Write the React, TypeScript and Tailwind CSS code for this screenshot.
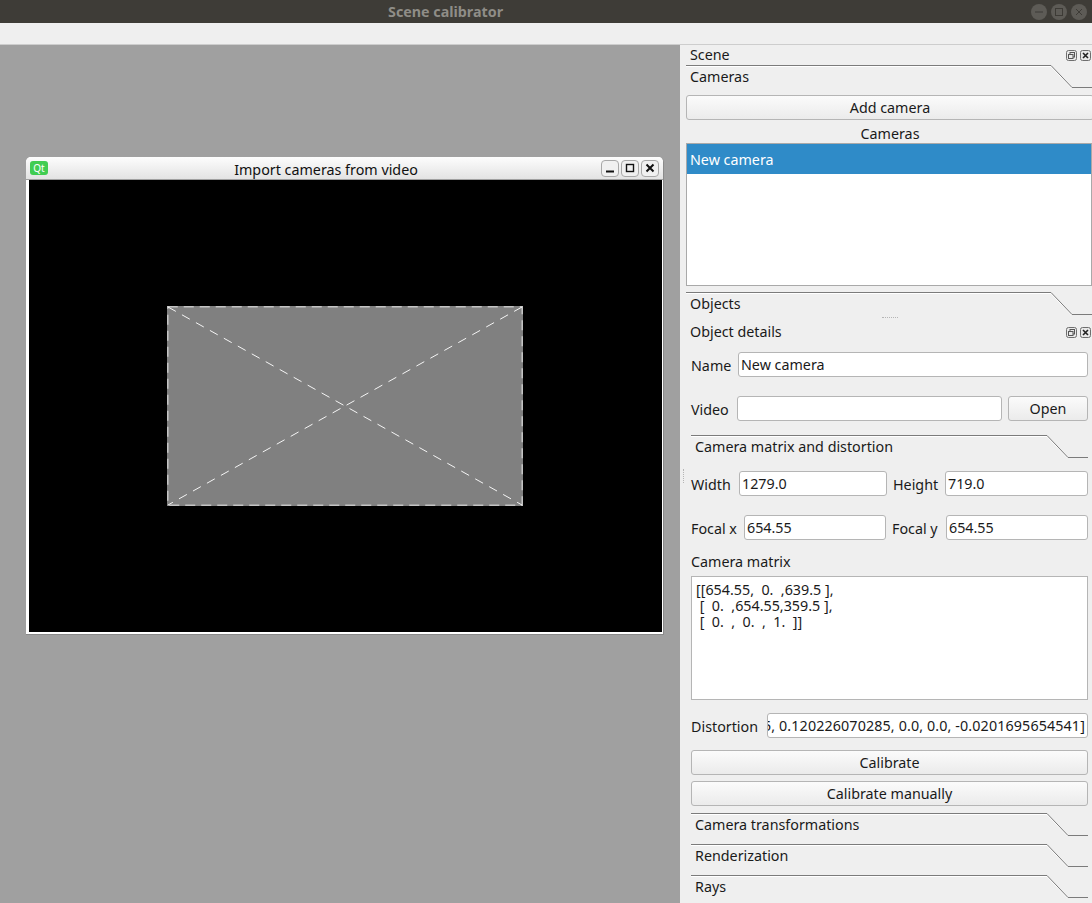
const FONT = "font-['Noto_Sans',sans-serif]";

const TabHeader = ({ label, width, indent = 4 }: { label: string; width: number; indent?: number }) => {
  return (
    <div className="relative h-[23px] shrink-0" style={{ width }}>
      <svg className="absolute left-0 top-0" width={width} height={23}>
        <path d={`M0 0.5 H${width - 41} L${width - 20} 22.5 H${width}`} fill="none" stroke="#fff" strokeWidth="1" transform="translate(0 1)" />
        <path d={`M0 0.5 H${width - 41} L${width - 20} 22.5 H${width}`} fill="none" stroke="#7b7b7b" strokeWidth="1" />
      </svg>
      <div className="absolute top-[2px] text-[14.3px] leading-[20px] text-[#1a1a1a]" style={{ left: indent }}>
        {label}
      </div>
    </div>
  );
};

const Field = ({ value, className }: { value: string; className: string }) => {
  return (
    <input
      readOnly
      value={value}
      className={`h-[25px] rounded-[3px] border border-[#b5b5b5] bg-white px-[2px] text-[14.3px] text-[#1a1a1a] outline-none ${className}`}
    />
  );
};

const QtButton = ({ label, className }: { label: string; className: string }) => {
  return (
    <button className={`h-[25px] rounded-[3px] border border-[#b5b5b5] bg-gradient-to-b from-[#fbfbfb] to-[#ebebeb] pt-[1px] text-center text-[14.3px] leading-[22px] text-[#1a1a1a] ${className}`}>
      {label}
    </button>
  );
};

const DockIcons = () => {
  return (
    <div className="flex gap-[3px]">
      <svg width="11" height="11" viewBox="0 0 11 11">
        <rect x="0.5" y="0.5" width="10" height="10" rx="2" fill="#e8e8e8" stroke="#6e6e6e" />
        <rect x="4" y="2.5" width="4.5" height="4.5" fill="none" stroke="#555" />
        <rect x="2.5" y="4.5" width="4.5" height="4" fill="#e8e8e8" stroke="#555" />
      </svg>
      <svg width="11" height="11" viewBox="0 0 11 11">
        <rect x="0.5" y="0.5" width="10" height="10" rx="2" fill="#e8e8e8" stroke="#6e6e6e" />
        <path d="M3 3 L8 8 M8 3 L3 8" stroke="#222" strokeWidth="1.6" />
      </svg>
    </div>
  );
};

const CircleButton = ({ children }: { children: React.ReactNode }) => {
  return (
    <div className="flex h-[16px] w-[16px] items-center justify-center rounded-full bg-[#5d5b56]">
      <svg width="10" height="10" viewBox="0 0 10 10" fill="none" stroke="#3d3b36" strokeWidth="1">
        {children}
      </svg>
    </div>
  );
};

const SubButton = ({ children }: { children: React.ReactNode }) => {
  return (
    <div className="flex h-[17px] w-[18px] items-center justify-center rounded-[4px] border border-[#a8a8a8] bg-[#f0f0f0]">
      <svg width="12" height="12" viewBox="0 0 12 12" fill="none" stroke="#111">
        {children}
      </svg>
    </div>
  );
};

const ImportWindow = () => {
  return (
    <div className="absolute left-[26px] top-[112px] flex h-[478px] w-[638px] flex-col rounded-t-[5px] border-r border-b border-[#8a8a8a] bg-white">
      <div className="relative flex h-[23px] shrink-0 items-center rounded-t-[5px] border-b border-[#a0a0a0] bg-gradient-to-b from-[#fdfdfd] to-[#e3e3e3] pl-[4px] pr-[4px]">
        <div className="flex h-[14px] w-[18px] items-center justify-center rounded-[3px] bg-[#41cd52] text-[10px] leading-none text-white">
          Qt
        </div>
        <div className="flex-1 pl-[3px] pt-[5px] text-center text-[14.3px] leading-none text-[#111]">
          Import cameras from video
        </div>
        <div className="flex gap-[2px]">
          <SubButton>
            <path d="M2 9.5 H10" strokeWidth="2" />
          </SubButton>
          <SubButton>
            <rect x="2.5" y="2.5" width="7" height="7" strokeWidth="1.4" />
          </SubButton>
          <SubButton>
            <path d="M2.5 2.5 L9.5 9.5 M9.5 2.5 L2.5 9.5" strokeWidth="2" />
          </SubButton>
        </div>
      </div>
      <div className="ml-[3px] mr-[1px] mb-[2px] flex flex-1 items-center justify-center bg-black pr-[2px]">
        <svg width="356" height="200" viewBox="0 0 356 200">
          <rect x="0" y="0" width="356" height="200" fill="#808080" />
          <rect x="0.75" y="0.75" width="354.5" height="198.5" fill="none" stroke="#c4c4c4" strokeWidth="1.6" strokeDasharray="10 6" />
          <path d="M1 1 L355 199 M355 1 L1 199" stroke="#f5f5f5" strokeDasharray="9 7" />
        </svg>
      </div>
    </div>
  );
};

const RightPanel = () => {
  return (
    <aside className="relative flex h-full w-[412px] shrink-0 flex-col overflow-hidden bg-[#efefef]">
      <div className="absolute left-[3px] top-[424px] h-[14px] border-l border-dotted border-[#b5b5b5]" />
      <div className="flex h-[20px] items-center justify-between pl-[10px] pr-[1px] text-[14.3px] text-[#1a1a1a]">
        <span>Scene</span>
        <DockIcons />
      </div>
      <div className="pl-[6px]">
        <TabHeader label="Cameras" width={406} />
      </div>
      <div className="flex pl-[6px] pt-[7px]">
        <QtButton label="Add camera" className="w-[408px] shrink-0" />
      </div>
      <div className="h-[23px] pl-[8px] text-center text-[14.3px] leading-[27px] text-[#1a1a1a]">Cameras</div>
      <div className="ml-[6px] h-[143px] w-[406px] border border-[#a9a9a9] bg-white">
        <div className="h-[30px] bg-[#2f8bc8] pl-[3px] text-[14.3px] leading-[31px] text-white">New camera</div>
      </div>
      <div className="pl-[6px] pt-[6px]">
        <TabHeader label="Objects" width={406} />
      </div>
      <div className="flex h-[3px] justify-center pl-[8px] pt-[2px]">
        <div className="h-[1px] w-[16px] border-t border-dotted border-[#b5b5b5]" />
      </div>
      <div className="flex h-[24px] items-center justify-between pl-[10px] pr-[1px] pt-[4px] text-[14.3px] text-[#1a1a1a]">
        <span>Object details</span>
        <DockIcons />
      </div>
      <div className="flex flex-col pl-[11px] pr-[4px] text-[14.3px] text-[#1a1a1a]">
        <div className="mt-[10px] flex items-center">
          <span className="w-[47px] pt-[3px]">Name</span>
          <Field value="New camera" className="w-[350px]" />
        </div>
        <div className="mt-[19px] flex items-center">
          <span className="w-[46px] pt-[3px]">Video</span>
          <Field value="" className="w-[265px]" />
          <QtButton label="Open" className="ml-[6px] w-[80px]" />
        </div>
        <div className="mt-[14px]">
          <TabHeader label="Camera matrix and distortion" width={397} />
        </div>
        <div className="mt-[13px] flex items-center">
          <span className="w-[48px] pt-[3px]">Width</span>
          <Field value="1279.0" className="w-[148px]" />
          <span className="w-[58px] pl-[6px] pt-[3px]">Height</span>
          <Field value="719.0" className="w-[143px]" />
        </div>
        <div className="mt-[19px] flex items-center">
          <span className="w-[53px] pt-[3px]">Focal x</span>
          <Field value="654.55" className="w-[142px]" />
          <span className="w-[60px] pl-[6px] pt-[3px]">Focal y</span>
          <Field value="654.55" className="w-[142px]" />
        </div>
        <div className="mt-[11px] h-[25px] leading-[22px]">Camera matrix</div>
        <pre className="h-[124px] border border-[#b5b5b5] bg-white px-[4px] py-[5px] font-['Noto_Sans',sans-serif] text-[14.3px] leading-[16px]">
          {"[[654.55,  0.  ,639.5 ],\n [  0.  ,654.55,359.5 ],\n [  0.  ,  0.  ,  1.  ]]"}
        </pre>
        <div className="mt-[13px] flex items-center">
          <span className="w-[76px] pt-[2px]">Distortion</span>
          <div className="flex h-[25px] w-[321px] items-center justify-end overflow-hidden whitespace-nowrap rounded-[3px] border border-[#b5b5b5] bg-white pr-[2px] tracking-[0.12px]">
            5, 0.120226070285, 0.0, 0.0, -0.0201695654541]
          </div>
        </div>
        <QtButton label="Calibrate" className="mt-[12px] w-[397px]" />
        <QtButton label="Calibrate manually" className="mt-[6px] w-[397px]" />
        <div className="mt-[7px] flex flex-col gap-[8px]">
          <TabHeader label="Camera transformations" width={397} />
          <TabHeader label="Renderization" width={397} />
          <TabHeader label="Rays" width={397} />
        </div>
      </div>
    </aside>
  );
};

const App = () => {
  return (
    <div className={`flex h-[903px] w-[1092px] flex-col overflow-hidden ${FONT}`}>
      <header className="flex h-[23px] shrink-0 items-center bg-[#3e3c37] pl-[388px] pr-[5px]">
        <span className="flex-1 text-[14.3px] font-bold text-[#8f8d87]">Scene calibrator</span>
        <div className="flex gap-[4px]">
          <CircleButton>
            <path d="M1 5 H9" />
          </CircleButton>
          <CircleButton>
            <rect x="1.5" y="1.5" width="7" height="7" />
          </CircleButton>
          <CircleButton>
            <path d="M2 2 L8 8 M8 2 L2 8" />
          </CircleButton>
        </div>
      </header>
      <div className="h-[22px] shrink-0 border-b border-[#cdcdcd] bg-[#efefef]" />
      <main className="flex min-h-0 flex-1">
        <div className="relative w-[680px] shrink-0 bg-[#a0a0a0]">
          <ImportWindow />
        </div>
        <RightPanel />
      </main>
    </div>
  );
};

export default App;
